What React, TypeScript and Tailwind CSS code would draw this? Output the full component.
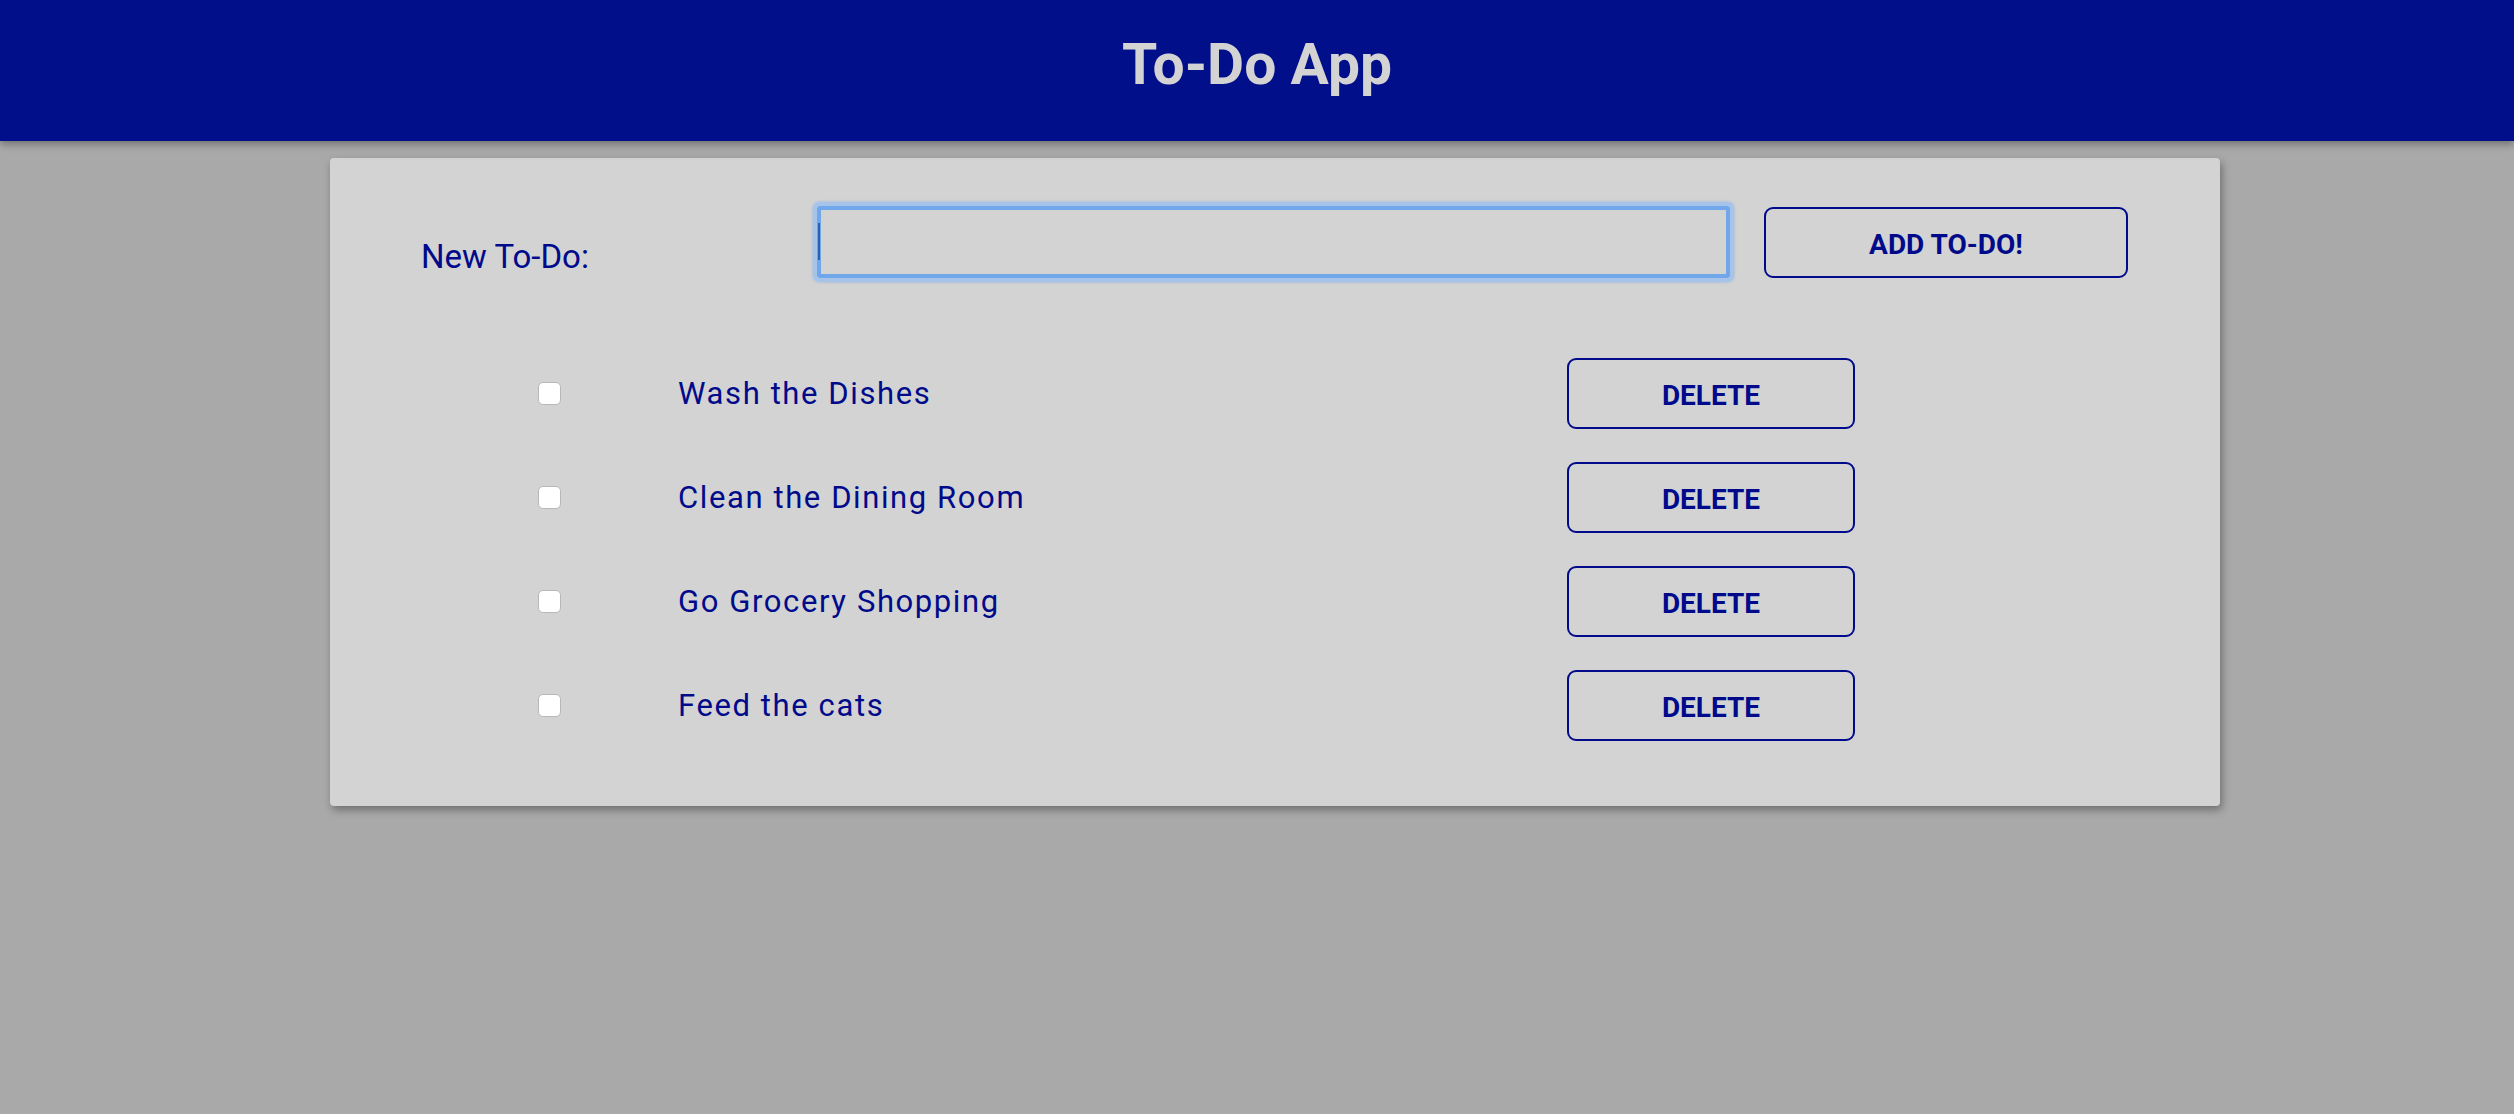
import React from "react";

const todos = [
  "Wash the Dishes",
  "Clean the Dining Room",
  "Go Grocery Shopping",
  "Feed the cats",
];

export default function App() {
  return (
    <div
      className="min-h-[1114px] w-full bg-[#a9a9a9]"
      style={{ fontFamily: "Roboto, 'Noto Sans', sans-serif" }}
    >
      <header className="relative z-10 flex h-[141px] items-center justify-center bg-[#020f8a] shadow-[0_3px_8px_rgba(0,0,0,0.35)]">
        <h1 className="text-[57px] font-bold leading-none text-[#d3d3d3] mt-[-12px]">To-Do App</h1>
      </header>

      <main className="pt-[17px]">
        <div className="ml-[330px] w-[1890px] h-[648px] rounded-[4px] bg-[#d3d3d3] shadow-[2px_4px_8px_rgba(0,0,0,0.35)] pt-[44px]">
          {/* New to-do row */}
          <div className="flex items-center">
            <label className="ml-[91px] w-[392px] pt-[28px] text-[33px] leading-none text-[#000a8a]">
              New To-Do:
            </label>
            <div className="relative h-[80px] w-[921px] rounded-[6px] border-[4px] border-[#a6c4ea] p-0 shadow-[0_0_3px_rgba(110,160,230,0.6)]">
              <div className="h-full w-full rounded-[3px] border-[4px] border-[#70a6ea] bg-[#d3d3d3]">
                <input
                  type="text"
                  className="h-full w-full bg-transparent outline-none"
                  aria-label="New To-Do"
                />
              </div>
              <span className="absolute left-[1px] top-[17px] h-[37px] w-[2px] bg-[#2d5fae]" />
            </div>
            <button className="ml-[30px] flex h-[71px] w-[364px] items-center justify-center rounded-[9px] border-2 border-[#000a8a] bg-transparent pt-[5px] text-[28px] font-bold leading-none text-[#000a8a]">
              ADD TO-DO!
            </button>
          </div>

          {/* List */}
          <ul className="mt-[76px] flex flex-col gap-[33px]">
            {todos.map((t) => (
              <li key={t} className="flex h-[71px] items-center">
                <input
                  type="checkbox"
                  className="ml-[208px] h-[23px] w-[23px] appearance-none rounded-[5px] border border-[#b8b8b8] bg-white"
                />
                <span className="ml-[117px] w-[889px] text-[31px] leading-none tracking-[1.6px] text-[#000a8a]">
                  {t}
                </span>
                <button className="flex h-[71px] w-[288px] items-center justify-center rounded-[9px] border-2 border-[#000a8a] bg-transparent pt-[5px] text-[28px] font-bold leading-none text-[#000a8a]">
                  DELETE
                </button>
              </li>
            ))}
          </ul>
        </div>
      </main>
    </div>
  );
}
